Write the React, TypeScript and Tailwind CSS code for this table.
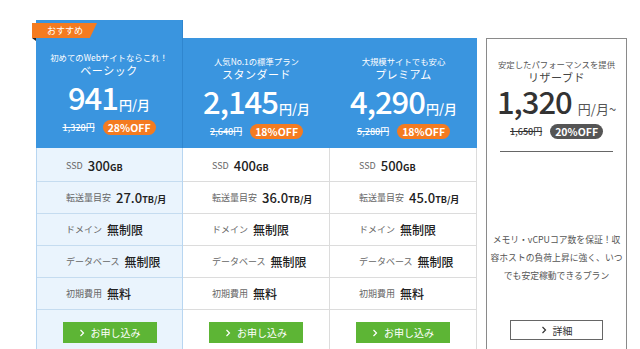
import { FC } from "react";

type Spec = { label: string; value: string; unit?: string; kanji?: boolean };

type Plan = {
  catch: string;
  name: string;
  price: string;
  regular: string;
  off: string;
  specs: Spec[];
};

const font = "font-['Noto_Sans_CJK_JP','Noto_Sans',sans-serif]";

const plans: Plan[] = [
  {
    catch: "初めてのWebサイトならこれ！",
    name: "ベーシック",
    price: "941",
    regular: "1,320円",
    off: "28%OFF",
    specs: [
      { label: "SSD", value: "300", unit: "GB" },
      { label: "転送量目安", value: "27.0", unit: "TB/月" },
      { label: "ドメイン", value: "無制限", kanji: true },
      { label: "データベース", value: "無制限", kanji: true },
      { label: "初期費用", value: "無料", kanji: true },
    ],
  },
  {
    catch: "人気No.1の標準プラン",
    name: "スタンダード",
    price: "2,145",
    regular: "2,640円",
    off: "18%OFF",
    specs: [
      { label: "SSD", value: "400", unit: "GB" },
      { label: "転送量目安", value: "36.0", unit: "TB/月" },
      { label: "ドメイン", value: "無制限", kanji: true },
      { label: "データベース", value: "無制限", kanji: true },
      { label: "初期費用", value: "無料", kanji: true },
    ],
  },
  {
    catch: "大規模サイトでも安心",
    name: "プレミアム",
    price: "4,290",
    regular: "5,280円",
    off: "18%OFF",
    specs: [
      { label: "SSD", value: "500", unit: "GB" },
      { label: "転送量目安", value: "45.0", unit: "TB/月" },
      { label: "ドメイン", value: "無制限", kanji: true },
      { label: "データベース", value: "無制限", kanji: true },
      { label: "初期費用", value: "無料", kanji: true },
    ],
  },
];

const Chevron: FC<{ color: string }> = ({ color }) => (
  <svg width="6" height="8" viewBox="0 0 6 8" className="mr-[6px]">
    <path d="M1.5 1 L4.5 4 L1.5 7" fill="none" stroke={color} strokeWidth="1.2" />
  </svg>
);

const SpecRows: FC<{ specs: Spec[]; line: string }> = ({ specs, line }) => (
  <div>
    {specs.map((s, i) => (
      <div
        key={s.label}
        className={`flex items-center pl-[29px] border-b ${line} ${i === 0 ? "h-[34px] pt-[3px]" : "h-[32px]"}`}
      >
        <span className="text-[9px] text-[#666] mr-[5px]">{s.label}</span>
        {s.kanji ? (
          <span className="text-[12px] font-medium text-[#222]">{s.value}</span>
        ) : (
          <span className="text-[13px] font-medium text-[#222]">
            {s.value}
            <span className="text-[9px] font-bold">{s.unit}</span>
          </span>
        )}
      </div>
    ))}
  </div>
);

const PlanCard: FC<{ plan: Plan; featured?: boolean }> = ({ plan, featured }) => (
  <div className={`relative w-[147px] ${featured ? "mt-[20px]" : "mt-[38px]"}`}>
    {featured && (
      <div className="absolute left-[-4px] top-[3px] z-10">
        <div className="h-[15px] w-[65px] bg-[#f47b20] text-white text-[9px] leading-[15px] pl-[15px] [clip-path:polygon(0_0,100%_0,89%_100%,0_100%)]">
          おすすめ
        </div>
        <div className="w-0 h-0 border-t-[3px] border-t-[#222] border-l-[4px] border-l-transparent" />
      </div>
    )}
    <div
      className={`flex flex-col items-center bg-[#3a95df] text-white ${
        featured ? "h-[128px] pt-[30px] border-r border-[#2f86cf]" : "h-[110px] pt-[16px]"
      }`}
    >
      <p className="text-[8.4px] leading-[14px] whitespace-nowrap">{plan.catch}</p>
      <p className="text-[11px] leading-[13px] tracking-[0.5px]">{plan.name}</p>
      <p className="mt-[2px] h-[36px] flex items-baseline font-medium">
        <span className="text-[31px] leading-[36px] tracking-[-1px]">{plan.price}</span>
        <span className="text-[13px] leading-[16px] ml-[1px]">円/月</span>
      </p>
      <div className="mt-[5px] h-[15px] flex items-center">
        <span className="text-[9px] font-medium line-through">{plan.regular}</span>
        <span className="ml-[8px] h-[15px] px-[5px] rounded-full bg-[#f47b20] text-[10.5px] leading-[15px] font-bold">
          {plan.off}
        </span>
      </div>
    </div>
    <div
      className={
        featured
          ? "bg-[#eaf4fd] border-x border-[#b8d6f1] h-[220px]"
          : "bg-white border-r border-[#dcdcdc] h-[220px]"
      }
    >
      <SpecRows specs={plan.specs} line={featured ? "border-[#c5dcf0]" : "border-[#dcdcdc]"} />
      <div className="flex justify-center pt-[12px]">
        <button className="flex items-center justify-center w-[94px] h-[21px] bg-[#5db535] text-white text-[10px]">
          <Chevron color="#fff" />
          お申し込み
        </button>
      </div>
    </div>
  </div>
);

const ReservedCard: FC = () => (
  <div className="ml-[9px] mt-[38px] w-[141px] h-[320px] border border-[#8a8a8a] bg-white flex flex-col items-center pt-[19px] text-[#333]">
    <p className="text-[8.4px] leading-[13px] text-[#555] whitespace-nowrap">安定したパフォーマンスを提供</p>
    <p className="text-[11px] leading-[13px] tracking-[0.5px] text-[#444]">リザーブド</p>
    <p className="mt-[-1px] h-[36px] flex items-baseline">
      <span className="text-[31px] leading-[36px] font-medium tracking-[-1px]">1,320</span>
      <span className="text-[13px] leading-[16px] text-[#555] ml-[6px]">円/月~</span>
    </p>
    <div className="mt-[5px] h-[15px] flex items-center">
      <span className="text-[9px] font-medium line-through">1,650円</span>
      <span className="ml-[8px] h-[15px] px-[5px] rounded-full bg-[#555] text-white text-[10.5px] leading-[15px] font-bold">
        20%OFF
      </span>
    </div>
    <div className="mt-[12px] w-[113px] border-t border-[#666]" />
    <p className="mt-[79px] text-center text-[8.8px] leading-[18px] text-[#555] whitespace-nowrap">
      メモリ・vCPUコア数を保証！収
      <br />
      容ホストの負荷上昇に強く、いつ
      <br />
      でも安定稼動できるプラン
    </p>
    <button className="mt-auto mb-[17px] flex items-center justify-center w-[93px] h-[20px] border border-[#666] text-[10px] text-[#333]">
      <Chevron color="#333" />
      詳細
    </button>
  </div>
);

export default function App() {
  return (
    <div className={`w-[640px] h-[349px] overflow-hidden bg-white flex items-start pl-[36px] ${font}`}>
      <PlanCard plan={plans[0]} featured />
      <PlanCard plan={plans[1]} />
      <PlanCard plan={plans[2]} />
      <ReservedCard />
    </div>
  );
}
